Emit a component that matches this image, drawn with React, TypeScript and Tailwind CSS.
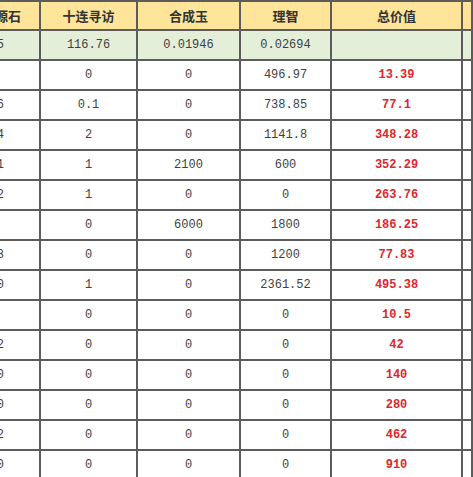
import React from "react";

type Row = {
  ys: string;
  sl: string;
  hc: string;
  lz: string;
  total: string;
};

const rows: Row[] = [
  { ys: "0.5", sl: "116.76", hc: "0.01946", lz: "0.02694", total: "" },
  { ys: "", sl: "0", hc: "0", lz: "496.97", total: "13.39" },
  { ys: "16", sl: "0.1", hc: "0", lz: "738.85", total: "77.1" },
  { ys: "54", sl: "2", hc: "0", lz: "1141.8", total: "348.28" },
  { ys: "21", sl: "1", hc: "2100", lz: "600", total: "352.29" },
  { ys: "12", sl: "1", hc: "0", lz: "0", total: "263.76" },
  { ys: "", sl: "0", hc: "6000", lz: "1800", total: "186.25" },
  { ys: "13", sl: "0", hc: "0", lz: "1200", total: "77.83" },
  { ys: "30", sl: "1", hc: "0", lz: "2361.52", total: "495.38" },
  { ys: "", sl: "0", hc: "0", lz: "0", total: "10.5" },
  { ys: "12", sl: "0", hc: "0", lz: "0", total: "42" },
  { ys: "20", sl: "0", hc: "0", lz: "0", total: "140" },
  { ys: "40", sl: "0", hc: "0", lz: "0", total: "280" },
  { ys: "62", sl: "0", hc: "0", lz: "0", total: "462" },
  { ys: "30", sl: "0", hc: "0", lz: "0", total: "910" },
];

const cell =
  "flex items-center justify-center border-solid border-0 border-r-2 border-b-2 border-[#5c5c5c] h-[30px] whitespace-nowrap overflow-hidden";
const num =
  "font-['Liberation_Mono','DejaVu_Sans_Mono',monospace] text-[12px] text-[#3f3f3f]";
const red =
  "font-['Liberation_Mono','DejaVu_Sans_Mono',monospace] font-bold text-[12px] text-[#e0262c]";
const head =
  "font-['Noto_Sans_CJK_SC',sans-serif] font-bold text-[13px] text-[#333]";

export default function App() {
  return (
    <div className="w-[473px] h-[477px] overflow-hidden bg-white">
      <div className="grid grid-cols-[41px_97px_103px_91px_131px_1fr]">
        {/* 表头 */}
        <div className={`${cell} h-[31px] border-t-2 justify-end pr-[18px] bg-[#fee59a]`}>
          <span className={head}>资源石</span>
        </div>
        {["十连寻访", "合成玉", "理智", "总价值", ""].map((h, i) => (
          <div key={i} className={`${cell} h-[31px] border-t-2 bg-[#fee59a]`}>
            <span className={head}>{h}</span>
          </div>
        ))}

        {/* 数据 */}
        {rows.map((r, i) => {
          const bg = i === 0 ? "bg-[#e3efd9]" : "bg-white";
          return (
            <React.Fragment key={i}>
              <div className={`${cell} ${bg} justify-end pr-[35px]`}>
                <span className={num}>{r.ys}</span>
              </div>
              <div className={`${cell} ${bg}`}>
                <span className={num}>{r.sl}</span>
              </div>
              <div className={`${cell} ${bg}`}>
                <span className={num}>{r.hc}</span>
              </div>
              <div className={`${cell} ${bg}`}>
                <span className={num}>{r.lz}</span>
              </div>
              <div className={`${cell} ${bg}`}>
                <span className={red}>{r.total}</span>
              </div>
              <div className={`${cell} ${bg}`} />
            </React.Fragment>
          );
        })}
      </div>
    </div>
  );
}
